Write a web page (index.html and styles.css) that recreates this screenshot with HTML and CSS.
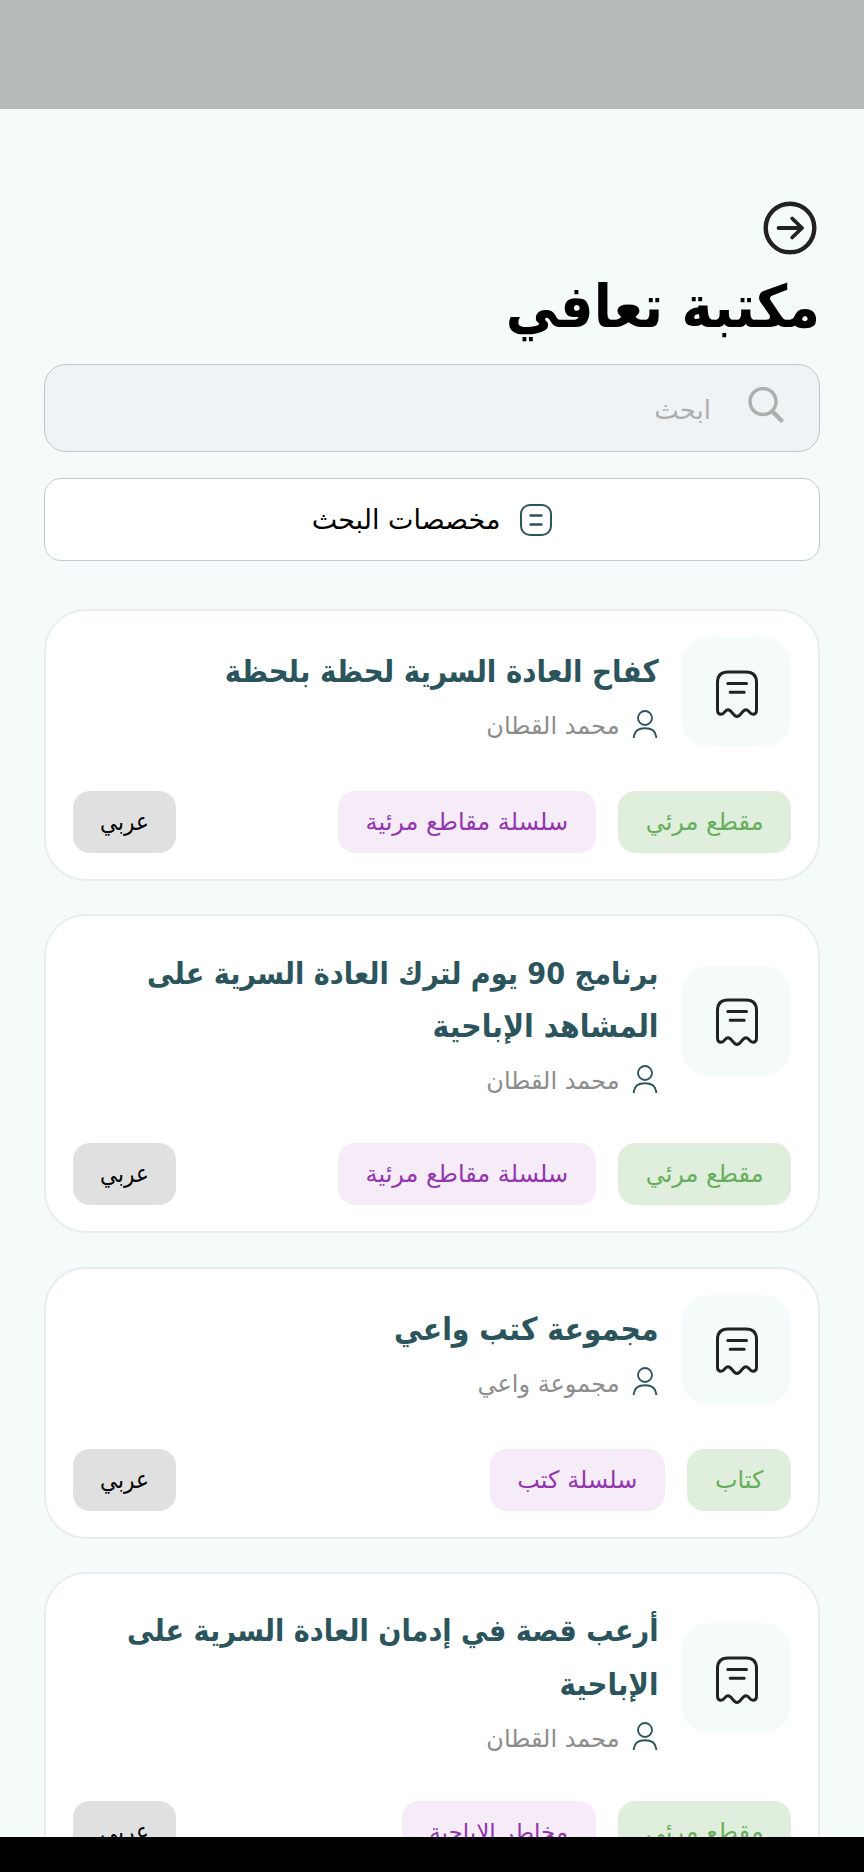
FILE: index.html
```html
<!DOCTYPE html>
<html lang="ar" dir="rtl">
<head>
<meta charset="utf-8">
<title>مكتبة تعافي</title>
<link rel="stylesheet" href="styles.css">
</head>
<body>
<svg class="defs" aria-hidden="true">
  <symbol id="receipt" viewBox="0 0 42 48">
    <path d="M12 2H30Q40.500 2 40.500 12.500V40C40.500 43 39 44.300 37 44.300C33.500 44.300 33.500 39.800 30 39.800C26 39.800 25 46.500 21 46.500S16 39.800 12 39.800C8.500 39.800 8.500 44.300 5 44.300C3 44.300 1.500 43 1.500 40V12.500Q1.500 2 12 2ZM11.800 13.500H30.500M14.200 22.300H28.200" fill="none" stroke="#222" stroke-width="3" stroke-linecap="round" stroke-linejoin="round"/>
  </symbol>
  <symbol id="person" viewBox="0 0 26 29">
    <circle cx="13" cy="8" r="7" fill="none" stroke="#2b545c" stroke-width="1.800"/>
    <path d="M1.800 28V26.500C2.500 21 7 18.200 13 18.200S23.500 21 24.200 26.500V28" fill="none" stroke="#2b545c" stroke-width="1.900"/>
  </symbol>
</svg>
<div class="screen">
  <div class="status"></div>
  <header class="header">
    <svg class="back" viewBox="0 0 54 54"><circle cx="27" cy="27" r="24.300" fill="none" stroke="#222" stroke-width="4.400"/><path d="M15.500 27H39M29.200 17.500 39 27 29.200 36.500" fill="none" stroke="#222" stroke-width="3.800" stroke-linecap="round" stroke-linejoin="round"/></svg>
    <h1 class="title">مكتبة تعافي</h1>
  </header>
  <div class="search">
    <svg class="magnifier" viewBox="0 0 36 36"><circle cx="15" cy="14.500" r="13" fill="none" stroke="#adafaf" stroke-width="3.500"/><path d="M24.500 24.500 33.300 33.300" stroke="#adafaf" stroke-width="4.400" stroke-linecap="round"/></svg>
    <span class="placeholder">ابحث</span>
  </div>
  <div class="filter">
    <svg class="filter-icon" viewBox="0 0 32 32"><rect x="1" y="1" width="30" height="30" rx="9" fill="none" stroke="#2b545c" stroke-width="2"/><path d="M10.500 11.500H21.500M10.500 20.500H21.500" stroke="#2b545c" stroke-width="2.400" stroke-linecap="round"/></svg>
    <span>مخصصات البحث</span>
  </div>
  <main class="list">
    <article class="card">
      <div class="top">
        <div class="thumb"><svg class="receipt"><use href="#receipt"/></svg></div>
        <div class="info">
          <h2 class="name"><span>كفاح العادة السرية لحظة بلحظة</span></h2>
          <div class="author"><svg class="person"><use href="#person"/></svg><span>محمد القطان</span></div>
        </div>
      </div>
      <div class="chips"><span class="chip green">مقطع مرئي</span><span class="chip purple">سلسلة مقاطع مرئية</span><span class="chip gray">عربي</span></div>
    </article>
    <article class="card">
      <div class="top tall">
        <div class="thumb"><svg class="receipt"><use href="#receipt"/></svg></div>
        <div class="info">
          <h2 class="name"><span class="narrow">برنامج 90 يوم لترك العادة السرية على</span><span class="wide">المشاهد الإباحية</span></h2>
          <div class="author"><svg class="person"><use href="#person"/></svg><span>محمد القطان</span></div>
        </div>
      </div>
      <div class="chips"><span class="chip green">مقطع مرئي</span><span class="chip purple">سلسلة مقاطع مرئية</span><span class="chip gray">عربي</span></div>
    </article>
    <article class="card">
      <div class="top">
        <div class="thumb"><svg class="receipt"><use href="#receipt"/></svg></div>
        <div class="info">
          <h2 class="name"><span class="wide">مجموعة كتب واعي</span></h2>
          <div class="author"><svg class="person"><use href="#person"/></svg><span>مجموعة واعي</span></div>
        </div>
      </div>
      <div class="chips"><span class="chip green">كتاب</span><span class="chip purple">سلسلة كتب</span><span class="chip gray">عربي</span></div>
    </article>
    <article class="card">
      <div class="top tall">
        <div class="thumb"><svg class="receipt"><use href="#receipt"/></svg></div>
        <div class="info">
          <h2 class="name"><span class="narrow">أرعب قصة في إدمان العادة السرية على</span><span>الإباحية</span></h2>
          <div class="author"><svg class="person"><use href="#person"/></svg><span>محمد القطان</span></div>
        </div>
      </div>
      <div class="chips"><span class="chip green">مقطع مرئي</span><span class="chip purple small">مخاطر الإباحية</span><span class="chip gray">عربي</span></div>
    </article>
  </main>
  <div class="navbar"></div>
</div>
</body>
</html>
```
FILE: styles.css
```css
* { box-sizing: border-box; margin: 0; }
body { background: #f5fbfb; font-family: "DejaVu Sans", sans-serif; color: #000; }
svg { display: block; flex: none; }
.defs { display: none; }
.screen { width: 864px; height: 1872px; overflow: hidden; display: flex; flex-direction: column; }
.status { height: 109px; background: #b6baba; flex: none; }
.header { padding: 92px 44px 0; height: 255px; flex: none; }
.back { width: 54px; height: 54px; margin-right: 3px; }
.title { font: bold 58.700px/80px "DejaVu Sans Condensed", "DejaVu Sans", sans-serif; margin-top: 12px; white-space: nowrap; }
.search { margin: 0 44px; height: 88px; flex: none; border: 1px solid #b9c7cb; border-radius: 22px; background: #f0f3f5; display: flex; align-items: center; padding: 0 35px; gap: 37px; }
.magnifier { width: 36px; height: 36px; margin-bottom: 7px; }
.placeholder { font-size: 26px; color: #adafaf; padding-top: 3px; }
.filter { margin: 26px 44px 0; height: 83px; flex: none; border: 1px solid #bfcdd1; border-radius: 17px; background: #fff; display: flex; align-items: center; justify-content: center; gap: 20px; font-size: 27px; }
.filter-icon { width: 32px; height: 32px; }
.list { flex: 1; min-height: 0; overflow: hidden; padding: 48px 44px 0; display: flex; flex-direction: column; gap: 33.300px; }
.card { flex: none; background: #fff; border: 2px solid #e9eded; border-radius: 42px; padding: 26px 27px 26px 26.500px; }
.top { display: flex; align-items: center; gap: 22.500px; height: 110px; }
.tall { height: 157px; }
.thumb { width: 110px; height: 110px; flex: none; border-radius: 28px; background: #f5fbfb; display: flex; align-items: center; justify-content: center; padding: 3px 0 0 1px; }
.receipt { width: 42px; height: 48px; }
.info { flex: 1; padding-top: 6px; }
.name { font: bold 30.800px/52.500px "DejaVu Sans Condensed", "DejaVu Sans", sans-serif; color: #2b545c; white-space: nowrap; }
.name span { display: block; }
.name .narrow { font-size: 30.200px; }
.name .wide { font-size: 31.500px; }
.author { display: flex; align-items: center; gap: 12px; margin-top: 9.700px; font-size: 24px; line-height: 36.800px; color: #8c8c8c; }
.author span { padding-top: 1px; }
.person { width: 26px; height: 29px; margin: 0 1px 4px 0; }
.chips { display: flex; gap: 22.500px; margin-top: 44px; }
.chip { height: 62px; line-height: 63px; padding: 0 27.500px; border-radius: 17px; font-size: 24px; white-space: nowrap; }
.green { background: #dfeedd; color: #66ae5b; }
.purple { background: #f5ecf8; color: #9336ae; }
.gray { background: #e0e0e0; margin-right: auto; font-family: "DejaVu Sans Condensed", "DejaVu Sans", sans-serif; }
.small { font-size: 23px; }
.navbar { height: 35px; flex: none; background: #000; }
```
